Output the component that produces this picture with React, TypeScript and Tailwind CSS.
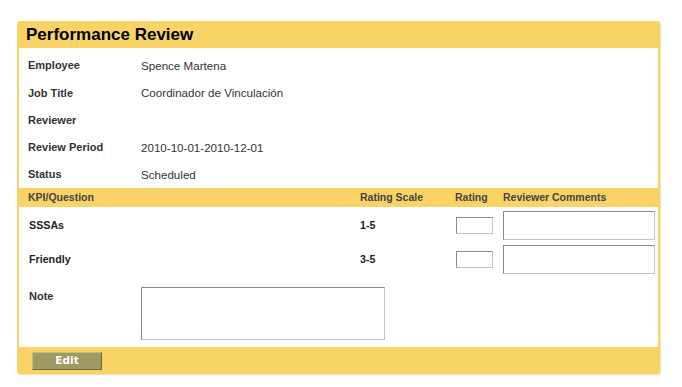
import React from "react";

const font = { fontFamily: '"Liberation Sans", Arial, sans-serif' };

function Info({ label, value, h }: { label: string; value?: string; h: string }) {
  return (
    <div className={`flex ${h} items-center pl-[9px] text-[#333]`}>
      <div className="w-[113px] text-[11px] font-bold">{label}</div>
      <div className="text-[11.6px]">{value}</div>
    </div>
  );
}

function KpiRow({ name, scale }: { name: string; scale: string }) {
  return (
    <div className="flex h-[29px] items-center pl-[10px] text-[10.7px] text-[#222]">
      <div className="w-[331px] font-bold">{name}</div>
      <div className="w-[95px] font-bold">{scale}</div>
      <div className="w-[48px] pl-[1px]">
        <div className="h-[17px] w-[37px] border border-t-[#8a8a8a] border-l-[#8a8a8a] border-r-[#c4c4c4] border-b-[#c4c4c4] bg-white" />
      </div>
      <div className="h-[29px] w-[152px] border border-t-[#8a8a8a] border-l-[#8a8a8a] border-r-[#c4c4c4] border-b-[#c4c4c4] bg-white" />
    </div>
  );
}

export default function App() {
  return (
    <div className="min-h-[387px] bg-white pt-[21px] pl-[17px]" style={font}>
      <div className="w-[643px] rounded-[3px] bg-[#f9d366] shadow-[1px_1px_1px_rgba(210,170,40,0.35)]">
        <div className="flex h-[27px] items-center pl-[9px] text-[17px] font-bold text-black">
          Performance Review
        </div>
        <div className="mx-[2px] bg-white">
          <div className="pt-[4px]">
            <Info h="h-[27px]" label="Employee" value="Spence Martena" />
            <Info h="h-[28px]" label="Job Title" value="Coordinador de Vinculación" />
            <Info h="h-[27px]" label="Reviewer" />
            <Info h="h-[27px]" label="Review Period" value="2010-10-01-2010-12-01" />
            <Info h="h-[27px]" label="Status" value="Scheduled" />
          </div>
          <div className="flex h-[19px] items-center bg-[#f9d366] pl-[9px] text-[10.5px] font-bold text-[#444]">
            <div className="w-[332px]">KPI/Question</div>
            <div className="w-[95px]">Rating Scale</div>
            <div className="w-[48px]">Rating</div>
            <div>Reviewer Comments</div>
          </div>
          <div className="flex flex-col gap-[5px] pt-[4px]">
            <KpiRow name="SSSAs" scale="1-5" />
            <KpiRow name="Friendly" scale="3-5" />
          </div>
          <div className="flex pt-[13px] pb-[7px] pl-[10px] text-[11px] text-[#333]">
            <div className="w-[112px] pt-[1px] font-bold">Note</div>
            <div className="h-[53px] w-[244px] border border-t-[#8a8a8a] border-l-[#8a8a8a] border-r-[#c4c4c4] border-b-[#c4c4c4] bg-white" />
          </div>
        </div>
        <div className="flex h-[27px] items-center pl-[15px]">
          <button
            className="flex h-[18px] w-[70px] items-center justify-center border border-t-[#c0bd8a] border-l-[#c0bd8a] border-r-[#6e6b3c] border-b-[#6e6b3c] bg-[#9e9a62] text-[10.5px] font-bold text-white"
            style={{ fontFamily: '"DejaVu Sans", Verdana, sans-serif' }}
          >
            Edit
          </button>
        </div>
      </div>
    </div>
  );
}
